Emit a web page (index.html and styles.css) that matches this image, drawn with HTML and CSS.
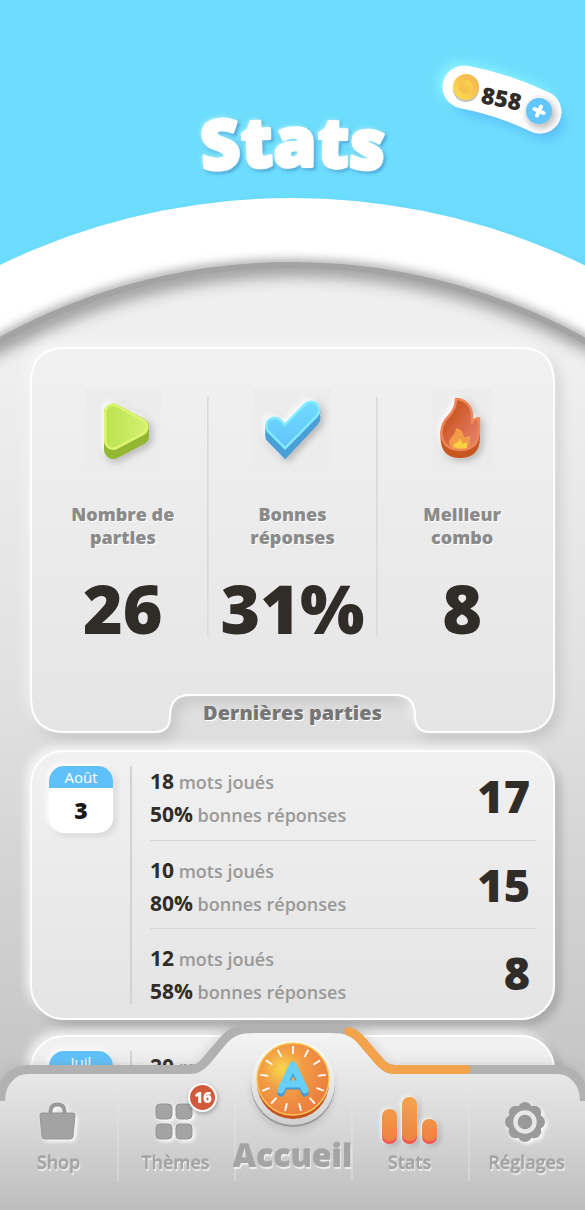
FILE: index.html
```html
<!DOCTYPE html>
<html lang="fr">
<head>
<meta charset="utf-8">
<meta name="viewport" content="width=device-width, initial-scale=1">
<title>Stats</title>
<link rel="stylesheet" href="styles.css">
</head>
<body>
<div class="app">
  <header class="hero">
    <svg class="hero-bg" viewBox="0 0 585 420" preserveAspectRatio="none" aria-hidden="true">
      <defs>
        <filter id="soft" x="-10%" y="-10%" width="120%" height="120%"><feGaussianBlur stdDeviation="5"/></filter>
        <filter id="softer" x="-10%" y="-10%" width="120%" height="120%"><feGaussianBlur stdDeviation="8"/></filter>
        <clipPath id="dome"><circle cx="292" cy="868" r="603"/></clipPath>
        <clipPath id="ring"><circle cx="292" cy="868" r="670"/></clipPath>
      </defs>
      <rect width="585" height="420" fill="#6dddfd"/>
      <circle cx="296" cy="872" r="670" fill="#5cc3e4" opacity=".5" filter="url(#soft)"/>
      <circle cx="292" cy="868" r="670" fill="#fff"/>
      <g clip-path="url(#ring)"><circle cx="292" cy="868" r="604" fill="none" stroke="#8f8f8f" stroke-width="10" opacity=".75" filter="url(#soft)"/></g>
      <circle cx="292" cy="868" r="603" fill="#efefef"/>
      <g clip-path="url(#dome)"><circle cx="296" cy="873" r="606" fill="none" stroke="#6d6d6d" stroke-width="16" opacity=".75" filter="url(#softer)"/></g>
      <circle cx="292" cy="868" r="603" fill="none" stroke="#a3a3a3" stroke-width="6"/>
    </svg>
    <div class="hero-content">
      <button class="coins" type="button" aria-label="858 pièces, en ajouter">
        <svg width="140" height="90" viewBox="432 55 140 90">
          <defs>
            <linearGradient id="coin" x1="0" y1="1" x2="1" y2="0"><stop offset="0" stop-color="#fbe24f"/><stop offset="1" stop-color="#f4ad50"/></linearGradient>
            <linearGradient id="coin2" x1="1" y1="0" x2="0" y2="1"><stop offset="0" stop-color="#f9d34e"/><stop offset="1" stop-color="#f5b94e"/></linearGradient>
            <filter id="b3" x="-50%" y="-50%" width="200%" height="200%"><feGaussianBlur stdDeviation="3"/></filter>
            <filter id="b6" filterUnits="userSpaceOnUse" x="400" y="20" width="200" height="170"><feGaussianBlur stdDeviation="6"/></filter>
          </defs>
          <path d="M458 82Q500 89 535 107" fill="none" stroke="#8ff5ff" stroke-width="38" stroke-linecap="round" filter="url(#b6)"/>
          <path d="M472 97Q510 104 546 122" fill="none" stroke="#5cbefa" stroke-width="36" stroke-linecap="round" filter="url(#b6)"/>
          <path d="M464 87Q502 94 540 112" fill="none" stroke="#fff" stroke-width="43" stroke-linecap="round"/>
          <circle cx="466" cy="89" r="13" fill="#9a9a9a" opacity=".6"/>
          <circle cx="466" cy="87" r="13" fill="url(#coin)"/>
          <circle cx="466" cy="87" r="7" fill="url(#coin2)"/>
          <text class="coins-value" transform="translate(480 103) rotate(11)">858</text>
          <circle cx="541" cy="114" r="15" fill="#aaa" opacity=".7" filter="url(#b3)"/>
          <circle cx="539" cy="111" r="13" fill="#62c6fb"/>
          <path d="M541 106.500L537 115.500M534.500 109L543.500 113" stroke="#fff" stroke-width="4" stroke-linecap="round"/>
        </svg>
      </button>
      <h1 class="title">
        <svg width="240" height="90" viewBox="0 0 240 90">
          <defs><path id="arc" d="M15 65Q120 54 225 65"/></defs>
          <text class="title-text"><textPath href="#arc" startOffset="50%">Stats</textPath></text>
        </svg>
      </h1>
    </div>
  </header>

  <main class="content">
    <section class="summary">
      <svg class="summary-bg" viewBox="0 0 525 386" preserveAspectRatio="none" aria-hidden="true">
        <defs><linearGradient id="panel" x1="0" y1="0" x2="0" y2="1"><stop offset="0" stop-color="#f1f1f1"/><stop offset="1" stop-color="#e5e5e5"/></linearGradient></defs>
        <path d="M35 1H490Q524 1 524 36V350Q524 385 490 385H400Q385 385 385 369Q385 348 365 348H160Q140 348 140 369Q140 385 125 385H35Q1 385 1 350V36Q1 1 35 1Z" fill="url(#panel)" stroke="#fff" stroke-width="2"/>
      </svg>
      <div class="summary-content">
        <dl class="stats">
          <div class="stat">
            <svg class="stat-icon" width="76" height="82" viewBox="0 0 76 82" aria-hidden="true">
              <defs><linearGradient id="lime" gradientUnits="userSpaceOnUse" x1="18" y1="0" x2="64" y2="0"><stop offset="0" stop-color="#b9e34c"/><stop offset="1" stop-color="#d6ef73"/></linearGradient></defs>
              <rect width="76" height="82" fill="#ececec"/>
              <g class="raised" stroke-linejoin="round">
                <path d="M28 23.500V61L55 47V38Z" fill="#94b733" stroke="#94b733" stroke-width="18"/>
                <path d="M28 23.500V52L54.500 38Z" fill="#def572" stroke="#def572" stroke-width="18"/>
                <path d="M28 23.500V52L54.500 38Z" fill="url(#lime)" stroke="url(#lime)" stroke-width="13"/>
              </g>
            </svg>
            <dt>Nombre de<br>parties</dt>
            <dd>26</dd>
          </div>
          <div class="stat">
            <svg class="stat-icon" width="78" height="82" viewBox="0 0 78 82" aria-hidden="true">
              <defs><linearGradient id="sky" gradientUnits="userSpaceOnUse" x1="0" y1="12" x2="0" y2="60"><stop offset="0" stop-color="#6fdcfc"/><stop offset="1" stop-color="#63c2fb"/></linearGradient></defs>
              <rect width="78" height="82" fill="#ececec"/>
              <g class="raised" fill="none" stroke-linecap="round">
                <path d="M21.500 46L32 56.500L58 29" stroke="#4a9fd8" stroke-width="19"/>
                <path d="M21.500 41L32 51.500L58 24" stroke="#4a9fd8" stroke-width="19"/>
                <path d="M21.500 37L32 47.500L58 21" stroke="#84ecff" stroke-width="19"/>
                <path d="M21.500 37L32 47.500L58 21" stroke="url(#sky)" stroke-width="14"/>
              </g>
            </svg>
            <dt>Bonnes<br>réponses</dt>
            <dd>31%</dd>
          </div>
          <div class="stat">
            <svg class="stat-icon" width="60" height="82" viewBox="0 0 60 82" aria-hidden="true">
              <defs><linearGradient id="fire" x1="0" y1="0" x2="1" y2="1"><stop offset=".3" stop-color="#cd5a28"/><stop offset="1" stop-color="#e98578"/></linearGradient></defs>
              <rect width="60" height="82" fill="#ececec"/>
              <g class="raised">
                <path d="M8.500 42V49Q9 69 28 69Q47.500 69 48 49V32Z" fill="#c8561f"/>
                <path d="M24 10C33 10 40 17 40 27V34Q42 29 47 29.500V43Q46 61 28 61Q9.500 60 9.500 43Q10 34 16 28Q24 20 24 10Z" fill="url(#fire)" stroke="#ee8658" stroke-width="2.500" stroke-linejoin="round"/>
                <path d="M24 39Q31 40 32 48L38 47V54Q36 60 30 60H22Q17 58 17 53Q18 49 22 45Q24 42 24 39Z" fill="#f29a48"/>
                <path d="M27 50Q30 50 30 55Q32 53 35 54V59Q28 61 22 58Q21 54 24 54Q27 53 27 50Z" fill="#fad145"/>
              </g>
            </svg>
            <dt>Meilleur<br>combo</dt>
            <dd>8</dd>
          </div>
        </dl>
        <h2 class="tab">Dernières parties</h2>
      </div>
    </section>

    <section class="day">
      <time class="date" datetime="08-03"><span class="month">Août</span><span class="number">3</span></time>
      <ul class="games">
        <li><div class="detail"><p><b>18</b> mots joués</p><p><b>50%</b> bonnes réponses</p></div><strong class="score">17</strong></li>
        <li><div class="detail"><p><b>10</b> mots joués</p><p><b>80%</b> bonnes réponses</p></div><strong class="score">15</strong></li>
        <li><div class="detail"><p><b>12</b> mots joués</p><p><b>58%</b> bonnes réponses</p></div><strong class="score">8</strong></li>
      </ul>
    </section>

    <section class="day">
      <time class="date" datetime="07"><span class="month">Juil</span><span class="number"></span></time>
      <ul class="games">
        <li><div class="detail"><p><b>20</b> mots joués</p></div></li>
      </ul>
    </section>
  </main>

  <nav class="nav">
    <svg class="nav-bg" viewBox="0 0 585 190" preserveAspectRatio="none" aria-hidden="true">
      <defs>
        <linearGradient id="bar" x1="0" y1="0" x2="0" y2="1"><stop offset="0" stop-color="#f5f5f5"/><stop offset=".5" stop-color="#dadada"/><stop offset="1" stop-color="#bdbdbd"/></linearGradient>
        <filter id="barshadow" x="-5%" y="-20%" width="110%" height="140%"><feGaussianBlur stdDeviation="6"/></filter>
      </defs>
      <path d="M2 81C2 63 12 49.500 28 49.500H190C197 49.500 201 47 206 41L223 21C231 11 240 8.500 254 8.500H331C345 8.500 354 11 362 21L379 41C384 47 388 49.500 395 49.500H557C573 49.500 583 63 583 81" fill="none" stroke="#777" stroke-opacity=".3" stroke-width="9" filter="url(#barshadow)"/>
      <path d="M0 190V81H2C2 63 12 49.500 28 49.500H190C197 49.500 201 47 206 41L223 21C231 11 240 8.500 254 8.500H331C345 8.500 354 11 362 21L379 41C384 47 388 49.500 395 49.500H557C573 49.500 583 63 583 81H585V190Z" fill="url(#bar)"/>
      <path d="M.500 81C.500 63 12 49.500 28 49.500H190C197 49.500 201 47 206 41L223 21C231 11 240 8.500 254 8.500H331C345 8.500 354 11 362 21L379 41C384 47 388 49.500 395 49.500H557C573 49.500 584.500 63 584.500 81" fill="none" stroke="#b1b1b1" stroke-width="9"/>
      <path d="M349 11.500Q356 14 362 21L379 41C384 47 388 49.500 395 49.500H466" fill="none" stroke="#f3a34c" stroke-width="9" stroke-linecap="round"/>
    </svg>
    <ul class="nav-list">
      <li><a href="#shop">
        <svg class="pressed" width="40" height="48" viewBox="0 0 40 48" aria-hidden="true">
          <path d="M11.500 17V14Q12 7.500 18.500 7.500Q25 7.500 25.500 14V17" fill="none" stroke="#999" stroke-width="4"/>
          <path d="M3 16H34Q36 16 36 19L34 39Q34 42 31 42H6Q3 42 3 39L1 19Q1 16 3 16Z" fill="#a3a3a3" stroke="#949494"/>
        </svg><span>Shop</span></a></li>
      <li><a href="#themes"><span class="icon-wrap">
        <svg class="pressed" width="40" height="48" viewBox="0 0 40 48" aria-hidden="true">
          <g fill="#a3a3a3" stroke="#949494"><rect x="1" y="7" width="16" height="15" rx="4"/><rect x="21" y="7" width="16" height="15" rx="4"/><rect x="1" y="27" width="16" height="15" rx="4"/><rect x="21" y="27" width="16" height="15" rx="4"/></g>
        </svg><span class="badge">16</span></span><span>Thèmes</span></a></li>
      <li class="home"><a href="#accueil">
        <svg width="100" height="100" viewBox="0 0 100 100" aria-hidden="true">
          <defs>
            <radialGradient id="orange" cx=".35" cy=".36" r=".65"><stop offset="0" stop-color="#f8d74c"/><stop offset=".45" stop-color="#f29c45"/><stop offset="1" stop-color="#ec8040"/></radialGradient>
            <filter id="ab" x="-30%" y="-30%" width="160%" height="160%"><feGaussianBlur stdDeviation="3"/></filter>
            <linearGradient id="cup" x1="0" y1="0" x2="0" y2="1"><stop offset="0" stop-color="#fff"/><stop offset="1" stop-color="#d0d0d0"/></linearGradient>
          </defs>
          <circle cx="50" cy="54" r="42" fill="#999" opacity=".3" filter="url(#ab)"/>
          <circle cx="50" cy="49" r="42" fill="#999"/>
          <circle cx="50" cy="47" r="42" fill="url(#cup)"/>
          <path d="M14 43V47A36 36 0 0 0 86 47V43Z" fill="#c9531e"/>
          <circle cx="50" cy="43" r="36" fill="url(#orange)" stroke="#f9cc5a" stroke-width="1.500"/>
          <g transform="translate(50 43)" stroke="#fff" stroke-width="1.800">
            <path id="tick" d="M0-25V-33"/><use href="#tick" transform="rotate(27.700)"/><use href="#tick" transform="rotate(55.400)"/><use href="#tick" transform="rotate(83)"/><use href="#tick" transform="rotate(110.800)"/><use href="#tick" transform="rotate(138.500)"/><use href="#tick" transform="rotate(166)"/><use href="#tick" transform="rotate(194)"/><use href="#tick" transform="rotate(221.500)"/><use href="#tick" transform="rotate(249)"/><use href="#tick" transform="rotate(277)"/><use href="#tick" transform="rotate(304.600)"/><use href="#tick" transform="rotate(332.300)"/>
          </g>
          <g fill="none" stroke-width="7" stroke-linecap="round" stroke-linejoin="round">
            <path d="M38 57L50 32L62 57M43 50H57" stroke="#4499d4"/>
            <path d="M38 54L50 29L62 54M43 48H57" stroke="#66d0f8"/>
          </g>
        </svg><span>Accueil</span></a></li>
      <li><a href="#stats" aria-current="page">
        <svg class="bars" width="56" height="48" viewBox="0 0 56 48" aria-hidden="true">
          <defs><linearGradient id="amber" gradientUnits="userSpaceOnUse" x1="0" y1="0" x2="0" y2="47"><stop offset="0" stop-color="#f3a54c"/><stop offset="1" stop-color="#ee7f42"/></linearGradient></defs>
          <g fill="#f05a54"><rect x="0" y="15" width="15" height="32" rx="7"/><rect x="20" y="15" width="15" height="32" rx="7"/><rect x="40" y="25" width="15" height="22" rx="7"/></g>
          <g fill="url(#amber)"><rect x="0" y="12" width="15" height="32" rx="7"/><rect x="20" y="0" width="15" height="44" rx="7"/><rect x="40" y="22" width="15" height="22" rx="7"/></g>
        </svg><span>Stats</span></a></li>
      <li><a href="#reglages">
        <svg class="pressed" width="44" height="48" viewBox="0 0 44 48" aria-hidden="true">
          <g fill="#9a9a9a"><circle cx="21" cy="25" r="17"/><circle cx="21" cy="12" r="7"/><circle cx="30.200" cy="15.800" r="7"/><circle cx="34" cy="25" r="7"/><circle cx="30.200" cy="34.200" r="7"/><circle cx="21" cy="38" r="7"/><circle cx="11.800" cy="34.200" r="7"/><circle cx="8" cy="25" r="7"/><circle cx="11.800" cy="15.800" r="7"/></g>
          <circle cx="21" cy="25" r="9.500" fill="#999" stroke="#e8e8e8" stroke-width="4.500"/>
        </svg><span>Réglages</span></a></li>
    </ul>
  </nav>
</div>
</body>
</html>
```
FILE: styles.css
```css
* { box-sizing: border-box; }

body {
  margin: 0;
  font-family: "Open Sans", "Noto Sans", sans-serif;
  color: #302c28;
}

h1, h2, p, ul, dl, dd { margin: 0; padding: 0; }
ul { list-style: none; }

.app {
  height: 100vh;
  overflow: hidden;
  background: linear-gradient(#efefef 0, #efefef 30%, #e0e0e0 58%, #c6c6c6 88%);
}

/* Header */
.hero {
  display: grid;
  height: 347px;
}

.hero-bg,
.hero-content { grid-area: 1 / 1; }

.hero-bg {
  width: 100%;
  height: 420px;
  -webkit-mask-image: linear-gradient(#000 82%, transparent);
  mask-image: linear-gradient(#000 82%, transparent);
}

.hero-content {
  z-index: 1;
  display: flex;
  flex-direction: column;
  padding-top: 55px;
}

.coins {
  align-self: flex-end;
  height: 90px;
  margin-right: 13px;
  padding: 0;
  border: 0;
  background: none;
}

.coins svg { display: block; overflow: visible; }

.coins-value {
  font: 800 23px "Open Sans", sans-serif;
  fill: #302c28;
}

.title {
  align-self: center;
  height: 90px;
  margin-top: -38px;
}

.title svg { display: block; overflow: visible; }

.title-text {
  font: 800 69px "Open Sans", sans-serif;
  text-anchor: middle;
  fill: #fff;
  stroke: #fff;
  stroke-width: 3px;
  stroke-linejoin: round;
  filter: drop-shadow(-1px -1px 2px #a8f6ff) drop-shadow(2px 2px 1px #4aa3d8);
}

/* Cards */
.content {
  position: relative;
  display: flex;
  flex-direction: column;
  padding: 0 30px;
}

.summary { display: grid; margin-bottom: 17px; }

.summary-bg,
.summary-content { grid-area: 1 / 1; }

.summary-bg {
  width: 100%;
  height: 100%;
  overflow: visible;
  filter: drop-shadow(-4px -4px 6px #ffffffb0) drop-shadow(5px 6px 6px #0000001f);
}

.summary-content {
  z-index: 1;
  display: flex;
  flex-direction: column;
  gap: 60px;
  padding: 50px 8px 3px;
}

.stats {
  display: grid;
  grid-template-columns: repeat(3, 1fr);
  height: 239px;
}

.stat {
  display: flex;
  flex-direction: column;
  align-items: center;
  text-align: center;
}

.stat + .stat { box-shadow: -1px 0 #dadada, inset 1px 0 #e0e0e0; }

.stat-icon { flex: none; margin-top: -8px; overflow: visible; }

.raised {
  filter: drop-shadow(-3px -3px 3px #fff) drop-shadow(3px 3px 3px #00000038);
}

.stat dt {
  margin-top: 32px;
  font-size: 18px;
  font-weight: 800;
  line-height: 23px;
  color: #8a8a8a;
  text-shadow: 1px 1px #fff;
}

.stat dd {
  margin-top: 31px;
  font-size: 68px;
  font-weight: 800;
  line-height: 56px;
}

.tab {
  font-size: 20px;
  font-weight: 800;
  line-height: 34px;
  text-align: center;
  color: #767676;
  text-shadow: 1px 1px #fff;
}

.day {
  display: flex;
  min-height: 270px;
  margin-bottom: 15px;
  padding: 0 17px;
  border: 2px solid #fff;
  border-radius: 34px;
  background: linear-gradient(#f1f1f1, #e4e4e4);
  box-shadow: -4px -4px 10px #ffffffc0, 5px 5px 10px #00000030;
}

.date {
  display: flex;
  flex: none;
  flex-direction: column;
  width: 64px;
  height: 67px;
  margin-top: 14px;
  overflow: hidden;
  border-radius: 15px;
  background: #fff;
  box-shadow: -2px -2px 6px #fff, 3px 3px 6px #0000001c;
  text-align: center;
}

.month {
  height: 22px;
  font-size: 15px;
  line-height: 22px;
  color: #fff;
  background: #60c1fa;
}

.number {
  font-size: 23px;
  font-weight: 800;
  line-height: 44px;
  color: #181818;
}

.games {
  flex: 1;
  padding-left: 20px;
  margin-left: 17px;
  background: linear-gradient(#d2d2d2, #d2d2d2) left 14px / 2px calc(100% - 28px) no-repeat;
}

.games li {
  display: flex;
  align-items: center;
  justify-content: space-between;
  height: 88px;
  padding-right: 6px;
}

.games li + li { border-top: 1px solid #d6d6d6; }

.detail {
  align-self: flex-start;
  padding-top: 13px;
  font-size: 18px;
  font-weight: 600;
  line-height: 32px;
  color: #999;
}

.detail b { font-size: 21px; font-weight: 700; color: #302c28; }

.score { font-size: 45px; font-weight: 800; line-height: 60px; }

/* Bottom navigation */
.nav {
  position: fixed;
  right: 0;
  bottom: 0;
  left: 0;
  display: grid;
  height: 190px;
}

.nav-bg,
.nav-list { grid-area: 1 / 1; }

.nav-bg { width: 100%; height: 190px; }

.nav-list {
  z-index: 1;
  display: grid;
  grid-template-columns: repeat(5, minmax(0, 1fr));
}

.nav-list li {
  display: flex;
  align-items: flex-end;
  justify-content: center;
}

.nav-list li + li {
  background: linear-gradient(#ffffff00, #ffffff40) left bottom 29px / 2px 110px no-repeat;
}

.nav-list a {
  display: flex;
  flex-direction: column;
  align-items: center;
  gap: 5px;
  padding-bottom: 36px;
  font-size: 18px;
  font-weight: 600;
  line-height: 24px;
  color: #a4a4a4;
  text-decoration: none;
  text-shadow: 0 -1px #8f8f8f80, 1px 2px 1px #ffffffb0;
}

.nav-list svg { display: block; overflow: visible; }

.nav-list .home a {
  gap: 0;
  font-size: 32px;
  font-weight: 800;
  line-height: 38px;
  padding-bottom: 36px;
}

.pressed { filter: drop-shadow(2px 2px 2px #fff); }

.bars { filter: drop-shadow(-1px -1px 2px #fff) drop-shadow(3px 2px 2px #00000028); }

.icon-wrap { position: relative; }

.badge {
  position: absolute;
  top: -14px;
  right: -22px;
  width: 29px;
  height: 29px;
  border: 2px solid #fff;
  border-radius: 50%;
  background: #d25a3c;
  box-shadow: 1px 2px 4px #00000040;
  font-size: 15px;
  font-weight: 800;
  line-height: 25px;
  text-align: center;
  color: #fff;
  text-shadow: none;
}
```
